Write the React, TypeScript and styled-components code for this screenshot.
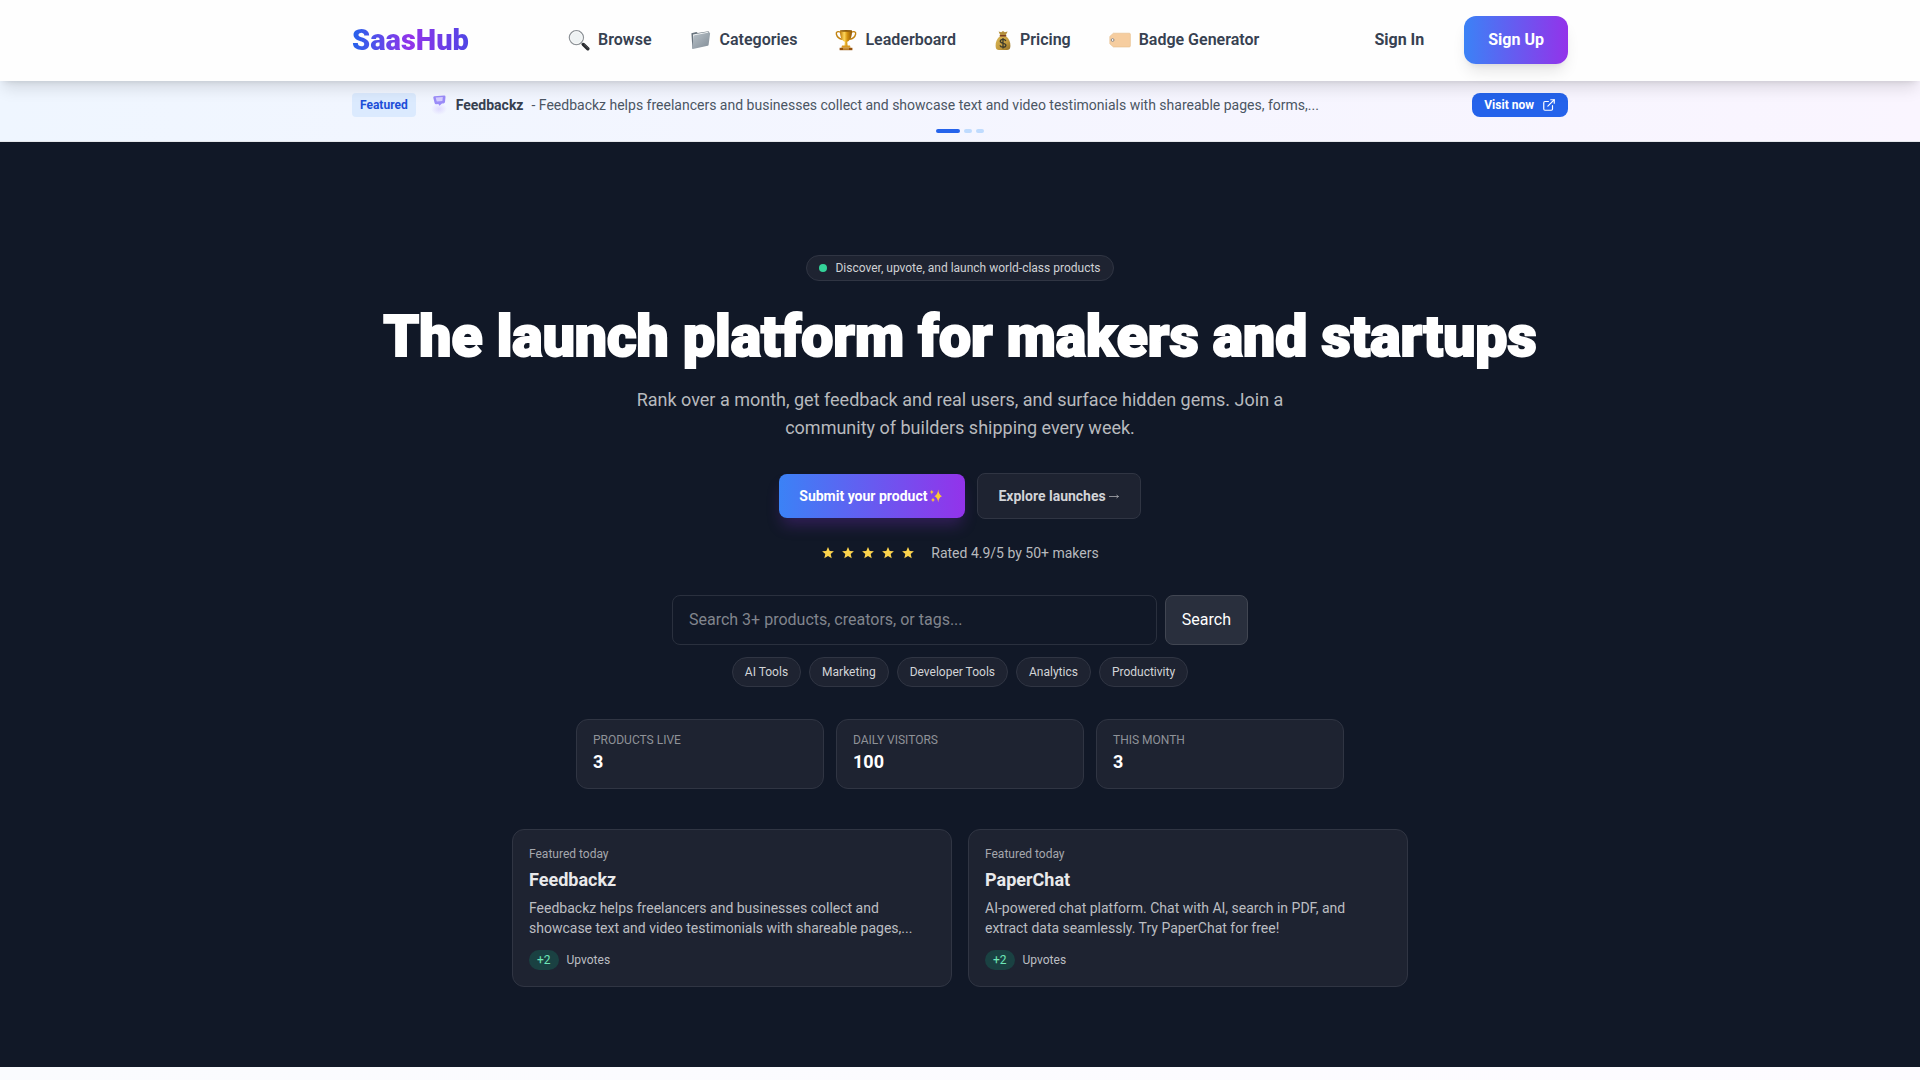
import React from "react";
import styled, { createGlobalStyle } from "styled-components";
import { ExternalLink } from "lucide-react";

const font = `Roboto, "Liberation Sans", sans-serif`;
const panel = "#1e2331";
const line = "#303543";
const brand = "linear-gradient(90deg, #3b82f6, #9333ea)";

const GlobalStyle = createGlobalStyle`
  *, *::before, *::after { box-sizing: border-box; }
  body {
    margin: 0;
    background: linear-gradient(90deg, #fafbfe, #fdfbff);
    font-family: ${font};
    font-size: 16px;
    line-height: 24px;
    color: #1f2937;
  }
  h1, h2, p, ul, dl, dd { margin: 0; padding: 0; }
  ul { list-style: none; }
  a { color: inherit; text-decoration: none; }
  button, input { font-family: inherit; }
  button { cursor: pointer; }
`;

const Container = styled.div`
  width: 100%;
  max-width: 1280px;
  margin: 0 auto;
  padding: 0 32px;
`;

/* Header */

const Header = styled.header`
  position: relative;
  z-index: 1;
  background: #fefefe;
  border-bottom: 1px solid #fefefe;
  box-shadow: 0 10px 15px -3px rgba(0, 0, 0, 0.12), 0 4px 6px -4px rgba(0, 0, 0, 0.12);
`;

const HeaderRow = styled(Container)`
  display: flex;
  align-items: center;
  justify-content: space-between;
  min-height: 80px;
`;

const Logo = styled.a`
  font-size: 29px;
  line-height: 36px;
  font-weight: 900;
  color: transparent;
  background: linear-gradient(90deg, #2563eb, #9333ea, #4f46e5);
  background-clip: text;
  -webkit-background-clip: text;
`;

const NavList = styled.ul`
  display: flex;
  gap: 6px;
`;

const NavLink = styled.a`
  display: flex;
  align-items: center;
  gap: 8px;
  padding: 8px 16px;
  font-weight: 600;
  color: #374151;

  svg {
    flex: none;
  }
`;

const Account = styled.div`
  display: flex;
  align-items: center;
  gap: 24px;
`;

const SignIn = styled.a`
  padding: 8px 16px;
  font-weight: 700;
  color: #374151;
`;

const SignUp = styled.a`
  padding: 12px 24px;
  border-radius: 12px;
  font-weight: 700;
  color: #fff;
  background: ${brand};
  box-shadow: 0 10px 15px -3px rgba(0, 0, 0, 0.1), 0 4px 6px -4px rgba(0, 0, 0, 0.1);
`;

/* Featured banner */

const Banner = styled.section`
  padding: 12px 0 8px;
  background: linear-gradient(90deg, #eff6ff, #faf5ff);
  border-bottom: 1px solid #e5e7eb;
`;

const BannerRow = styled(Container)`
  display: flex;
  align-items: center;
  min-height: 24px;
  gap: 12px;
  font-size: 14px;
  line-height: 20px;
`;

const FeaturedTag = styled.span`
  padding: 4px 8px;
  border-radius: 4px;
  font-size: 12px;
  line-height: 16px;
  font-weight: 700;
  color: #1d4ed8;
  background: #dbeafe;
`;

const Spotlight = styled.p`
  flex: 1;
  display: flex;
  align-items: center;
  gap: 8px;
  color: #4b5563;

  strong {
    font-weight: 700;
    color: #374151;
  }
`;

const VisitLink = styled.a`
  display: flex;
  align-items: center;
  gap: 8px;
  padding: 4px 12px;
  border-radius: 8px;
  font-size: 12px;
  line-height: 16px;
  font-weight: 700;
  color: #fff;
  background: #2563eb;
`;

const Dots = styled.div`
  display: flex;
  justify-content: center;
  gap: 4px;
  margin-top: 12px;
`;

const Dot = styled.button<{ $active?: boolean }>`
  width: ${(p) => (p.$active ? 24 : 8)}px;
  height: 4px;
  padding: 0;
  border: 0;
  border-radius: 4px;
  background: ${(p) => (p.$active ? "#2563eb" : "#bfdbfe")};
`;

/* Hero */

const Hero = styled.main`
  display: flex;
  flex-direction: column;
  align-items: center;
  padding: 113px 32px 80px;
  background: #111827;
  color: #fff;
`;

const Announcement = styled.p`
  display: flex;
  align-items: center;
  gap: 8px;
  padding: 4px 12px;
  border: 1px solid ${line};
  border-radius: 16px;
  background: ${panel};
  font-size: 12px;
  line-height: 16px;
  color: #cfd1d4;

  &::before {
    content: "";
    width: 8px;
    height: 8px;
    border-radius: 50%;
    background: #34d399;
  }
`;

const Title = styled.h1`
  margin-top: 26px;
  font-size: 57px;
  line-height: 60px;
  font-weight: 900;
  text-align: center;
  -webkit-text-stroke: 2px #fff;
  stroke-linejoin: round;
`;

const Lead = styled.p`
  max-width: 672px;
  margin-top: 19px;
  font-size: 18px;
  line-height: 28px;
  text-align: center;
  color: #b8babe;
`;

const Actions = styled.div`
  display: flex;
  align-items: center;
  gap: 12px;
  margin-top: 31px;
`;

const Action = styled.a<{ $primary?: boolean }>`
  display: flex;
  align-items: center;
  gap: 2px;
  padding: 12px 20px;
  border: ${(p) => (p.$primary ? "0" : `1px solid ${line}`)};
  border-radius: 8px;
  font-size: 14px;
  line-height: 20px;
  font-weight: 700;
  color: ${(p) => (p.$primary ? "#fff" : "#d2d4d7")};
  background: ${(p) => (p.$primary ? brand : panel)};
  box-shadow: ${(p) => (p.$primary ? "0 10px 15px -3px rgba(147, 51, 234, 0.25)" : "none")};
`;

const Rating = styled.div`
  display: flex;
  align-items: center;
  gap: 16px;
  margin-top: 24px;
  font-size: 14px;
  line-height: 20px;
  color: #b8babe;
`;

const Stars = styled.span`
  display: flex;
  gap: 6px;
`;

const SearchForm = styled.form`
  display: flex;
  gap: 8px;
  width: 100%;
  max-width: 576px;
  margin-top: 32px;
`;

const SearchInput = styled.input`
  flex: 1;
  min-width: 0;
  padding: 12px 16px;
  border: 1px solid #2a303e;
  border-radius: 8px;
  background: transparent;
  font-size: 16px;
  line-height: 24px;
  color: #fff;

  &::placeholder {
    color: #81858d;
    opacity: 1;
  }
`;

const SearchButton = styled.button`
  padding: 12px 16px;
  border: 1px solid #414652;
  border-radius: 8px;
  background: #292f3d;
  font-size: 16px;
  line-height: 24px;
  color: #fff;
`;

const Tags = styled.ul`
  display: flex;
  flex-wrap: wrap;
  justify-content: center;
  gap: 8px;
  margin-top: 12px;
`;

const Tag = styled.a`
  display: block;
  padding: 6px 12px;
  border: 1px solid ${line};
  border-radius: 16px;
  background: ${panel};
  font-size: 12px;
  line-height: 16px;
  color: #d2d4d7;
`;

const Stats = styled.dl`
  display: grid;
  grid-template-columns: repeat(3, 1fr);
  gap: 12px;
  width: 100%;
  max-width: 768px;
  margin-top: 32px;
`;

const Stat = styled.div`
  padding: 12px 16px;
  border: 1px solid ${line};
  border-radius: 12px;
  background: ${panel};

  dt {
    font-size: 12px;
    line-height: 16px;
    text-transform: uppercase;
    color: #8f9298;
  }

  dd {
    font-size: 18px;
    line-height: 28px;
    font-weight: 700;
  }
`;

const Cards = styled.div`
  display: grid;
  grid-template-columns: repeat(2, 1fr);
  gap: 16px;
  width: 100%;
  max-width: 896px;
  margin-top: 40px;
`;

const Card = styled.article`
  padding: 16px;
  border: 1px solid ${line};
  border-radius: 12px;
  background: ${panel};
`;

const Eyebrow = styled.p`
  font-size: 12px;
  line-height: 16px;
  color: #a5a7ad;
`;

const CardTitle = styled.h2`
  margin-top: 4px;
  font-size: 18px;
  line-height: 28px;
  font-weight: 700;
  color: #e9e9eb;
`;

const CardText = styled.p`
  margin-top: 4px;
  padding-right: 16px;
  font-size: 14px;
  line-height: 20px;
  color: #bcbec2;
`;

const Votes = styled.p`
  display: flex;
  align-items: center;
  gap: 8px;
  margin-top: 12px;
  font-size: 12px;
  line-height: 16px;
  color: #bcbec2;
`;

const VoteCount = styled.span`
  padding: 2px 8px;
  border-radius: 12px;
  background: #1a4142;
  color: #6ee7b7;
`;

/* Icons */

const MagnifierIcon = () => (
  <svg width="22" height="22" viewBox="0 0 22 22" aria-hidden="true">
    <path d="M13.6 14.2l2 1.6" stroke="#8b9096" strokeWidth="2" />
    <path d="M15.4 15.6l4.4 4.2" stroke="#26282c" strokeWidth="3.4" strokeLinecap="round" />
    <path d="M16.2 15.6l4 3.8" stroke="#5d6066" strokeWidth="0.8" strokeLinecap="round" />
    <circle cx="8.4" cy="8.6" r="7" fill="#eef2f3" stroke="#8d9297" strokeWidth="1.4" />
    <circle cx="8.4" cy="8.6" r="6" fill="none" stroke="#fff" strokeWidth="0.8" />
  </svg>
);

const FolderIcon = () => (
  <svg width="22" height="22" viewBox="0 0 22 22" aria-hidden="true">
    <defs>
      <linearGradient id="folder" x1="0" y1="0" x2="1" y2="1">
        <stop offset="0" stopColor="#b9c2c9" />
        <stop offset="1" stopColor="#818c96" />
      </linearGradient>
    </defs>
    <path d="M1.4 4.2l5-1.2 1.4 1 10.8-1.8 0.6 2L2.4 19.4z" fill="#68737d" />
    <path d="M3 5.6l15.2-2.8 0.6 2-15 12z" fill="#f1f4f5" />
    <path d="M3.6 7.4q0.1-1 1-1.2l14.6-2.6q1-0.1 0.9 0.8l-1.5 11.4q-0.1 0.8-0.9 1L2.9 20q-0.9 0.1-0.8-0.8z" fill="url(#folder)" />
  </svg>
);

const TrophyIcon = () => (
  <svg width="22" height="22" viewBox="0 0 22 22" aria-hidden="true">
    <defs>
      <linearGradient id="cup" x1="0" x2="1">
        <stop offset="0" stopColor="#b87508" />
        <stop offset="0.35" stopColor="#ffd75a" />
        <stop offset="0.6" stopColor="#d4930f" />
        <stop offset="1" stopColor="#8f5606" />
      </linearGradient>
    </defs>
    <path d="M6 3.4C2.6 1.8 0.8 3 1.4 5.2c0.6 2.4 3 4.6 6 5M16 3.4c3.4-1.6 5.2-0.4 4.6 1.8-0.6 2.4-3 4.6-6 5" fill="none" stroke="#c2830f" strokeWidth="1.4" />
    <path d="M5 1.4h12c0.2 6-1.6 10-4.8 11.4l0.4 4.2H9.4l0.4-4.2C6.6 11.4 4.8 7.4 5 1.4z" fill="url(#cup)" />
    <ellipse cx="11" cy="1.8" rx="6" ry="0.9" fill="#8a5a0c" />
    <path d="M7 16.6h8l0.6 2.2H6.4z" fill="#d99a22" />
    <path d="M4.6 18.8h12.8v2.4H4.6z" fill="#96510c" />
    <path d="M8 19.4h6v1H8z" fill="#e9bd58" />
  </svg>
);

const MoneyBagIcon = () => (
  <svg width="18" height="22" viewBox="1 0 18 22" aria-hidden="true">
    <defs>
      <linearGradient id="bag" x1="0" y1="0" x2="1" y2="1">
        <stop offset="0" stopColor="#dcb958" />
        <stop offset="0.6" stopColor="#c29a3d" />
        <stop offset="1" stopColor="#8d6c26" />
      </linearGradient>
    </defs>
    <path d="M5.6 2.4l2.6 0.8L10 2l1.8 1.2 2.8-0.8-2 4H7.4z" fill="#b48f3c" />
    <path d="M7.2 7C4 9.6 2.4 13 2.6 17c0.1 3 1.4 4 3.4 4h8c2 0 3.3-1 3.4-4 0.2-4-1.4-7.4-4.6-10z" fill="url(#bag)" />
    <rect x="6.6" y="6" width="6.8" height="1.6" rx="0.8" fill="#7b3f22" />
    <path d="M12.8 12c-0.4-1.2-1.4-1.6-2.8-1.6-1.6 0-2.7 0.7-2.7 1.9 0 2.8 5.6 1.2 5.6 4 0 1.2-1.2 1.9-2.9 1.9-1.5 0-2.7-0.6-3-1.9M10 9v10.6" fill="none" stroke="#3d3b2c" strokeWidth="1.3" />
  </svg>
);

const LabelIcon = () => (
  <svg width="22" height="22" viewBox="0 0 22 22" aria-hidden="true">
    <path d="M4.4 4.2h15.8q1.2 0 1.2 1.2v11.4q0 1.2-1.2 1.2H4.4L0.8 14.8V7.4z" fill="#f6cd9f" stroke="#e6bd8c" strokeWidth="0.6" />
    <circle cx="3.6" cy="11" r="1.4" fill="#fff" stroke="#8e8781" strokeWidth="1" />
  </svg>
);

const FeedbackzIcon = () => (
  <svg width="20" height="20" viewBox="0 0 20 20" aria-hidden="true">
    <defs>
      <radialGradient id="glow">
        <stop offset="0" stopColor="#c9b8ff" stopOpacity="0.45" />
        <stop offset="1" stopColor="#c9b8ff" stopOpacity="0" />
      </radialGradient>
    </defs>
    <ellipse cx="11" cy="14" rx="8" ry="6" fill="url(#glow)" />
    <path d="M6.4 1.2l9.8-0.6q1.4 0 1.3 1.4l-0.5 5q-0.2 1.2-1.6 1.4l-1.4 0.2-2.6 2.2-1-1.8-2.200 0.200Q6.800 9.300 6.600 8L5.300 2.800Q5.100 1.400 6.400 1.200z" fill="#9a8bf8" />
    <path d="M7.6 2.400l7.200-0.400-0.400 4-5.600 0.500z" fill="#d5cdff" />
  </svg>
);

const SparklesIcon = () => (
  <svg width="16" height="16" viewBox="0 -1 16 16" aria-hidden="true">
    <g fill="#fcc934">
      <path d="M9.2 0.6q0.5 5.4 3.8 6.6-3.3 1.2-3.8 6.4-0.5-5.2-3.8-6.4 3.3-1.2 3.8-6.6z" />
      <path d="M2.8 0.8q0.2 2 1.9 2.3-1.7 0.3-1.9 2.3-0.2-2-1.9-2.3 1.7-0.3 1.9-2.3z" />
      <path d="M4 8.6q0.2 2 1.9 2.3-1.7 0.3-1.9 2.3-0.2-2-1.9-2.3 1.7-0.3 1.9-2.3z" />
    </g>
  </svg>
);

const StarIcon = () => (
  <svg width="14" height="14" viewBox="0 0 14 14" aria-hidden="true">
    <path d="M7 1l1.7 3.9 4.2 0.4-3.2 2.8 1 4.2L7 10.1l-3.7 2.2 1-4.2L1.1 5.3l4.2-0.4z" fill="#fcd34d" />
  </svg>
);

const ArrowIcon = () => (
  <svg width="12" height="14" viewBox="0 0 12 14" aria-hidden="true">
    <path d="M1 7.5h9.5M8.5 6l2 1.5-2 1.5" fill="none" stroke="#a9abb0" strokeWidth="0.8" />
  </svg>
);

const navItems = [
  { label: "Browse", Icon: MagnifierIcon },
  { label: "Categories", Icon: FolderIcon },
  { label: "Leaderboard", Icon: TrophyIcon },
  { label: "Pricing", Icon: MoneyBagIcon },
  { label: "Badge Generator", Icon: LabelIcon },
];

const tags = ["AI Tools", "Marketing", "Developer Tools", "Analytics", "Productivity"];

const stats = [
  { label: "Products live", value: "3" },
  { label: "Daily visitors", value: "100" },
  { label: "This month", value: "3" },
];

const featured = [
  {
    name: "Feedbackz",
    text: "Feedbackz helps freelancers and businesses collect and showcase text and video testimonials with shareable pages,...",
    votes: 2,
  },
  {
    name: "PaperChat",
    text: "AI-powered chat platform. Chat with AI, search in PDF, and extract data seamlessly. Try PaperChat for free!",
    votes: 2,
  },
];

export default function App() {
  return (
    <>
      <GlobalStyle />
      <Header>
        <HeaderRow>
          <Logo href="#">SaasHub</Logo>
          <nav aria-label="Main">
            <NavList>
              {navItems.map(({ label, Icon }) => (
                <li key={label}>
                  <NavLink href="#">
                    <Icon />
                    {label}
                  </NavLink>
                </li>
              ))}
            </NavList>
          </nav>
          <Account>
            <SignIn href="#">Sign In</SignIn>
            <SignUp href="#">Sign Up</SignUp>
          </Account>
        </HeaderRow>
      </Header>

      <Banner aria-label="Featured product">
        <BannerRow>
          <FeaturedTag>Featured</FeaturedTag>
          <Spotlight>
            <FeedbackzIcon />
            <strong>Feedbackz</strong>
            <span>
              - Feedbackz helps freelancers and businesses collect and showcase text and video
              testimonials with shareable pages, forms,...
            </span>
          </Spotlight>
          <VisitLink href="#">
            Visit now
            <ExternalLink size={14} strokeWidth={2} aria-hidden="true" />
          </VisitLink>
        </BannerRow>
        <Dots>
          <Dot type="button" $active aria-label="Slide 1" />
          <Dot type="button" aria-label="Slide 2" />
          <Dot type="button" aria-label="Slide 3" />
        </Dots>
      </Banner>

      <Hero>
        <Announcement>Discover, upvote, and launch world-class products</Announcement>
        <Title>The launch platform for makers and startups</Title>
        <Lead>
          Rank over a month, get feedback and real users, and surface hidden gems. Join a community
          of builders shipping every week.
        </Lead>
        <Actions>
          <Action href="#" $primary>
            Submit your product
            <SparklesIcon />
          </Action>
          <Action href="#">
            Explore launches
            <ArrowIcon />
          </Action>
        </Actions>
        <Rating>
          <Stars>
            {[1, 2, 3, 4, 5].map((n) => (
              <StarIcon key={n} />
            ))}
          </Stars>
          Rated 4.9/5 by 50+ makers
        </Rating>
        <SearchForm role="search" onSubmit={(e) => e.preventDefault()}>
          <SearchInput
            type="search"
            aria-label="Search products"
            placeholder="Search 3+ products, creators, or tags..."
          />
          <SearchButton type="submit">Search</SearchButton>
        </SearchForm>
        <Tags>
          {tags.map((tag) => (
            <li key={tag}>
              <Tag href="#">{tag}</Tag>
            </li>
          ))}
        </Tags>
        <Stats>
          {stats.map((s) => (
            <Stat key={s.label}>
              <dt>{s.label}</dt>
              <dd>{s.value}</dd>
            </Stat>
          ))}
        </Stats>
        <Cards>
          {featured.map((item) => (
            <Card key={item.name}>
              <Eyebrow>Featured today</Eyebrow>
              <CardTitle>{item.name}</CardTitle>
              <CardText>{item.text}</CardText>
              <Votes>
                <VoteCount>+{item.votes}</VoteCount>
                Upvotes
              </Votes>
            </Card>
          ))}
        </Cards>
      </Hero>
    </>
  );
}
